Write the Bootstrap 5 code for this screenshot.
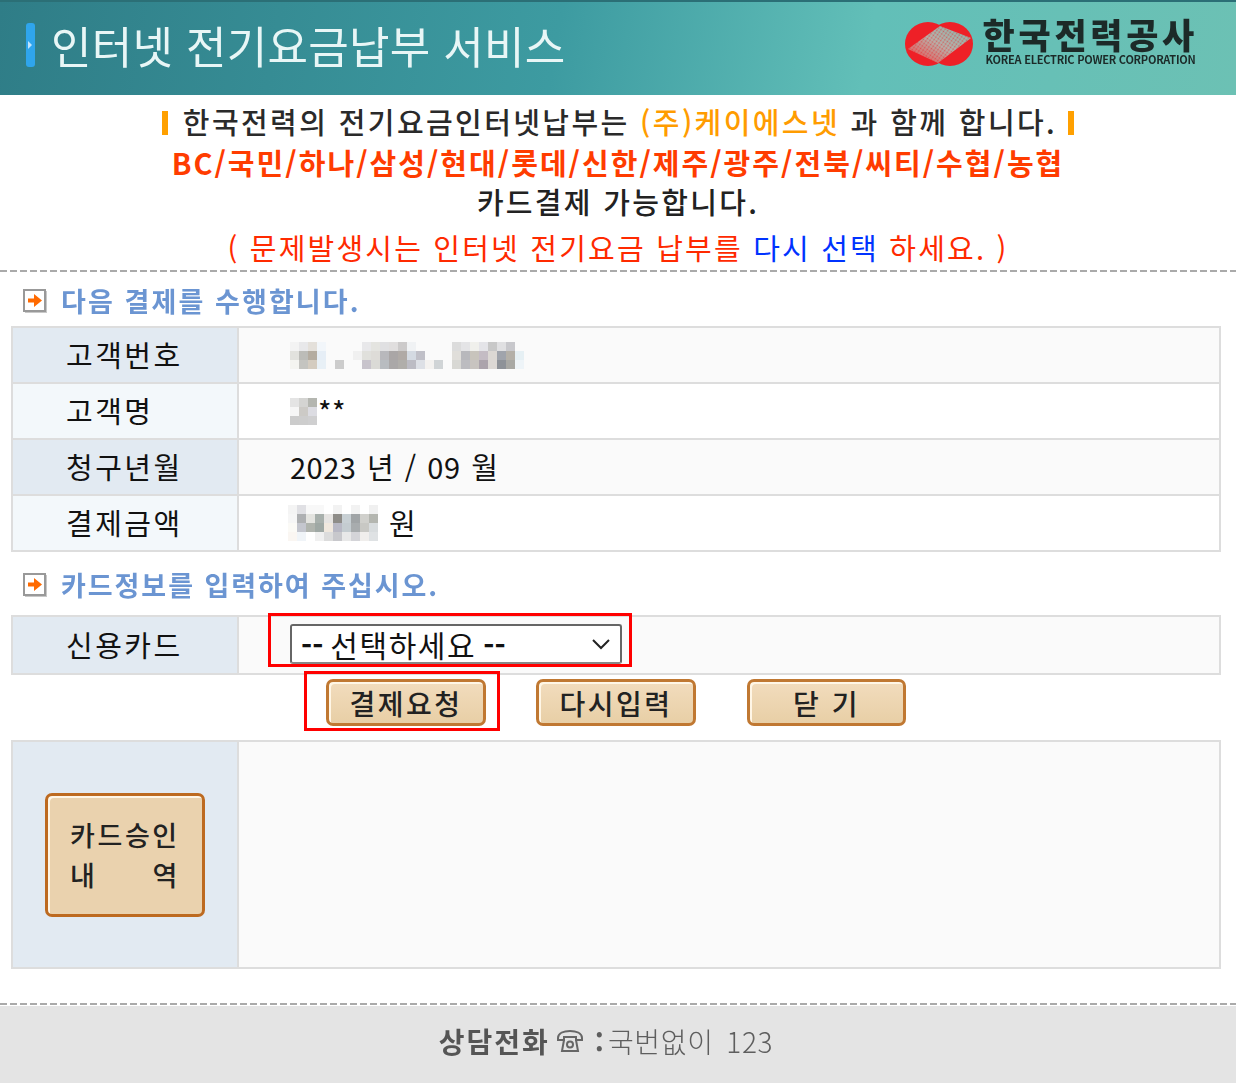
<!DOCTYPE html>
<html lang="ko">
<head>
<meta charset="utf-8">
<title>인터넷 전기요금납부 서비스</title>
<link href="https://cdn.jsdelivr.net/npm/bootstrap@5.3.0/dist/css/bootstrap.min.css" rel="stylesheet">
<style>
html,body{margin:0;background:#fff}
body{font-family:"Noto Sans CJK KR","Liberation Sans",sans-serif;color:#111;width:1236px;overflow-x:hidden}
.hdr{height:95px;border-top:2px solid #2b6f76;background:linear-gradient(100deg,#2f7d87 0%,#3d9ba1 45%,#62bfb8 70%,#6cc1b4 100%);padding:0 38px 7px 26px}
.hdr-bar{width:9px;height:44px;border-radius:3px;background:#2fa5ec;position:relative}
.hdr-bar::after{content:"";position:absolute;left:2px;top:18px;border-left:4px solid #bfe6ff;border-top:4px solid transparent;border-bottom:4px solid transparent}
.hdr-title{font-size:44px;font-weight:400;color:#e8f6f6;letter-spacing:.3px;margin-left:16px;line-height:1;filter:blur(.5px)}
.logo-wrap{gap:10px;margin-top:-3px}
.logo-txt{margin-top:-2px}
.logo-k{font-size:35px;font-weight:900;color:#1c2a28;letter-spacing:3.7px;line-height:28px;filter:blur(.4px)}
.logo-e{font-size:11px;font-weight:700;color:#1c2a28;line-height:11px;letter-spacing:-.25px;white-space:nowrap;filter:blur(.4px);margin:6px 0 0 3px}
.notice{font-size:29px;line-height:40px;text-align:center;white-space:nowrap}
.notice-1{font-weight:500;color:#2a2a2a;height:47px;padding-top:6px;letter-spacing:2.4px}
.notice-2{font-weight:700;color:#ff3c00;height:39px;letter-spacing:2.05px}
.notice-3{font-weight:500;color:#222;height:40px;letter-spacing:2.3px}
.notice-4{font-weight:400;color:#ff2a00;height:49px;padding-top:6px;letter-spacing:2.2px}
.tick{display:inline-block;width:6px;height:24px;background:#ffa000;vertical-align:-1px}
.tick-l{margin-right:15px}
.tick-r{margin-left:11px}
.orange{color:#ff9c00}.blue{color:#0033ff}
.dash{height:2px;background:repeating-linear-gradient(90deg,#aaa 0 7px,transparent 7px 10px)}
.sect{height:54px;padding-left:23px;padding-top:4px;gap:14px;font-size:27px;font-weight:700;color:#6b95d2;letter-spacing:2.1px}
.sect span{filter:blur(.6px)}
.sect-2{height:63px;padding-top:3px;letter-spacing:1.95px}
.pane{margin:0 15px 0 11px;border:2px solid #ddd;border-bottom-width:0}
.line{border-bottom:2px solid #ddd;height:56px;font-size:29px}
.line.pad{height:58px}
.lab{width:226px;flex:none;background:#e2eaf2;border-right:2px solid #ddd;letter-spacing:2.5px;padding-left:53px}
.lab-2{background:#f3f8fb}
.val{background:#fafafa;padding-left:51px;flex:1;letter-spacing:.5px;word-spacing:2px}
.val-2{background:#fff}
.mos{display:block}
.mos-l{margin-left:-2px;margin-right:3px}
.pick{position:relative}
.sel{width:332px;height:40px;border:2px solid #666;border-bottom-color:#888;border-radius:3px;background:#fff;font-size:30px;padding-left:9px;line-height:34px;letter-spacing:1.6px;word-spacing:-3px;font-weight:400;margin-top:-2px}
.sel b{font-weight:700;letter-spacing:0}
.chev{margin-left:auto;margin-right:9px}
.redbox{position:absolute;border:3px solid #f00;pointer-events:none}
.r1{left:255px;top:-4px;width:364px;height:54px}
.r2{left:304px;top:-4px;width:196px;height:60px}
.acts{height:65px;position:relative;padding-left:326px;padding-top:4px}
.kbtn{width:160px;height:47px;background:linear-gradient(#f2dcbd,#e8cfa6);border:3px solid #c07832;border-radius:7px;box-shadow:inset 2px 2px 0 #fff6e6;font-size:28px;font-weight:500;color:#222;display:flex;align-items:center;justify-content:center;letter-spacing:2.5px;padding:0;white-space:nowrap}
.btn-gap1{margin-left:50px}
.btn-gap2{margin-left:51px;width:159px}
.kbtn.tall{height:124px;background:#ead2ae;border-color:#bd6a20;flex-direction:column;font-size:27px;line-height:40px;letter-spacing:0}
.kbtn.tall i{font-style:normal;display:flex;justify-content:space-between;width:110px;letter-spacing:2.6px}
.big{height:227px}
.big .lab{padding-left:32px}
.foot-d{margin-top:34px}
.foot{height:77px;background:#e4e4e4;margin-top:1px;padding-bottom:7px;padding-right:24px;font-size:28px;color:#5e5e5e;filter:blur(.3px)}
.foot b{font-weight:700;color:#555;letter-spacing:2px}
.ph{margin:0 12px 0 7px}
.colon{font-weight:700;margin-right:4px}
.foot-t{font-weight:300;letter-spacing:.7px;word-spacing:4px}
</style>
</head>
<body>
<header class="hdr d-flex align-items-center">
  <div class="hdr-bar"></div>
  <div class="hdr-title">인터넷 전기요금납부 서비스</div>
  <div class="logo-wrap ms-auto d-flex align-items-center">
    <svg width="68" height="46" viewBox="0 0 68 46">
      <defs>
      <pattern id="dots" width="3" height="3" patternUnits="userSpaceOnUse" patternTransform="rotate(35)"><circle cx="1.5" cy="1.5" r=".9" fill="#ee2027"/></pattern>
      <linearGradient id="band" x1="0" y1="1" x2="1" y2="0"><stop offset="0" stop-color="#f04a4a"/><stop offset=".5" stop-color="#b5b5ad"/><stop offset=".8" stop-color="#96bbb1"/><stop offset="1" stop-color="#c77"/></linearGradient>
      <clipPath id="cc"><ellipse cx="23" cy="23" rx="23" ry="22"/><ellipse cx="45" cy="23" rx="23" ry="22"/></clipPath></defs>
      <ellipse cx="23" cy="23" rx="23" ry="22" fill="#ee2027"/><ellipse cx="45" cy="23" rx="23" ry="22" fill="#ee2027"/>
      <polygon points="3,28 35,5 66,17 33,42" fill="url(#band)" clip-path="url(#cc)"/>
      <polygon points="3,28 35,5 66,17 33,42" fill="url(#dots)" opacity=".55" clip-path="url(#cc)"/>
    </svg>
    <div class="logo-txt">
      <div class="logo-k">한국전력공사</div>
      <div class="logo-e">KOREA ELECTRIC POWER CORPORATION</div>
    </div>
  </div>
</header>

<div class="notice notice-1"><span class="tick tick-l"></span>한국전력의 전기요금인터넷납부는 <span class="orange">(주)케이에스넷</span> 과 함께 합니다.<span class="tick tick-r"></span></div>
<div class="notice notice-2">BC/국민/하나/삼성/현대/롯데/신한/제주/광주/전북/씨티/수협/농협</div>
<div class="notice notice-3">카드결제 가능합니다.</div>
<div class="notice notice-4">( 문제발생시는 인터넷 전기요금 납부를 <span class="blue">다시 선택</span> 하세요. )</div>
<div class="dash"></div>

<div class="sect d-flex align-items-center">
  <svg width="24" height="24" viewBox="0 0 24 24"><rect x="2" y="2" width="22" height="22" fill="#c8c8c8"/><rect x="1" y="1" width="21" height="21" fill="#fff" stroke="#999" stroke-width="2"/><path d="M5 9.500h6V5l8 6.500-8 6.500v-4.500H5z" fill="#ff6a00"/></svg>
  <span>다음 결제를 수행합니다.</span>
</div>

<div class="pane">
  <div class="line d-flex">
    <div class="lab d-flex align-items-center">고객번호</div>
    <div class="val d-flex align-items-center">
      <svg class="mos" width="236" height="27" shape-rendering="crispEdges"><g>
      <rect x="0" width="9" height="9" fill="#f3f3f3"/><rect x="9" width="9" height="9" fill="#e8e8ea"/><rect x="18" width="9" height="9" fill="#e4e0da"/><rect x="27" width="9" height="9" fill="#f2f6fa"/>
      <rect x="0" y="9" width="9" height="9" fill="#e2e2de"/><rect x="9" y="9" width="9" height="9" fill="#bcbcb8"/><rect x="18" y="9" width="9" height="9" fill="#b4aca0"/><rect x="27" y="9" width="9" height="9" fill="#e6eef6"/>
      <rect x="0" y="18" width="9" height="9" fill="#f4f4f0"/><rect x="9" y="18" width="9" height="9" fill="#c4c4c0"/><rect x="18" y="18" width="9" height="9" fill="#d4ccc0"/><rect x="27" y="18" width="9" height="9" fill="#e8f0f6"/>
      <rect x="45" y="18" width="9" height="9" fill="#cccccc"/>
      <rect x="72" width="9" height="9" fill="#e8e8ea"/><rect x="81" width="9" height="9" fill="#e4e4e0"/><rect x="90" width="9" height="9" fill="#e0e0e2"/><rect x="99" width="9" height="9" fill="#e0dede"/><rect x="108" width="9" height="9" fill="#cccaca"/><rect x="117" width="9" height="9" fill="#f0f2f4"/>
      <rect x="63" y="9" width="9" height="9" fill="#f0f0f0"/><rect x="72" y="9" width="9" height="9" fill="#e0e0dc"/><rect x="81" y="9" width="9" height="9" fill="#dedcd8"/><rect x="90" y="9" width="9" height="9" fill="#b8b8bc"/><rect x="99" y="9" width="9" height="9" fill="#aaa6a6"/><rect x="108" y="9" width="9" height="9" fill="#b0aaa6"/><rect x="117" y="9" width="9" height="9" fill="#d4dae2"/><rect x="126" y="9" width="9" height="9" fill="#c0c0c8"/>
      <rect x="72" y="18" width="9" height="9" fill="#c8c4cc"/><rect x="81" y="18" width="9" height="9" fill="#dadad6"/><rect x="90" y="18" width="9" height="9" fill="#b8bcc0"/><rect x="99" y="18" width="9" height="9" fill="#aaa8a8"/><rect x="108" y="18" width="9" height="9" fill="#b0aeaa"/><rect x="117" y="18" width="9" height="9" fill="#bcbcc4"/><rect x="126" y="18" width="9" height="9" fill="#dde0e6"/><rect x="135" y="18" width="9" height="9" fill="#f4f2f0"/><rect x="144" y="18" width="9" height="9" fill="#d0d4d6"/>
      <rect x="162" width="9" height="9" fill="#dcdcdc"/><rect x="171" width="9" height="9" fill="#e4e4e6"/><rect x="180" width="9" height="9" fill="#f0f0ec"/><rect x="189" width="9" height="9" fill="#e4e4e8"/><rect x="198" width="9" height="9" fill="#c8c8c8"/><rect x="207" width="9" height="9" fill="#e0e0e2"/><rect x="216" width="9" height="9" fill="#c8c8cc"/>
      <rect x="162" y="9" width="9" height="9" fill="#e0deda"/><rect x="171" y="9" width="9" height="9" fill="#b8b8bc"/><rect x="180" y="9" width="9" height="9" fill="#c8c4bc"/><rect x="189" y="9" width="9" height="9" fill="#c4bcc4"/><rect x="198" y="9" width="9" height="9" fill="#dcd8d4"/><rect x="207" y="9" width="9" height="9" fill="#a0a4ac"/><rect x="216" y="9" width="9" height="9" fill="#b4b0a8"/><rect x="225" y="9" width="9" height="9" fill="#e6f0f4"/>
      <rect x="162" y="18" width="9" height="9" fill="#d8d8d4"/><rect x="171" y="18" width="9" height="9" fill="#bcbcc0"/><rect x="180" y="18" width="9" height="9" fill="#c8c4c0"/><rect x="189" y="18" width="9" height="9" fill="#aca4ac"/><rect x="198" y="18" width="9" height="9" fill="#dcd8d4"/><rect x="207" y="18" width="9" height="9" fill="#8e9298"/><rect x="216" y="18" width="9" height="9" fill="#a8a8a4"/><rect x="225" y="18" width="9" height="9" fill="#eef4f8"/>
      </g></svg>
    </div>
  </div>
  <div class="line d-flex">
    <div class="lab lab-2 d-flex align-items-center">고객명</div>
    <div class="val val-2 d-flex align-items-center">
      <svg class="mos" width="28" height="27" shape-rendering="crispEdges">
      <rect x="0" width="9" height="9" fill="#e4e4e4"/><rect x="9" width="9" height="9" fill="#d4d4d2"/><rect x="18" width="9" height="9" fill="#b4b6b0"/>
      <rect x="0" y="9" width="9" height="9" fill="#f6f6f6"/><rect x="9" y="9" width="9" height="9" fill="#cccac6"/><rect x="18" y="9" width="9" height="9" fill="#dcdce2"/>
      <rect x="0" y="18" width="9" height="9" fill="#cccccc"/><rect x="9" y="18" width="9" height="9" fill="#cdcdcd"/><rect x="18" y="18" width="9" height="9" fill="#cfcfd0"/></svg>
      <span>**</span>
    </div>
  </div>
  <div class="line d-flex">
    <div class="lab d-flex align-items-center">청구년월</div>
    <div class="val d-flex align-items-center">2023 년 / 09 월</div>
  </div>
  <div class="line d-flex">
    <div class="lab lab-2 d-flex align-items-center">결제금액</div>
    <div class="val val-2 d-flex align-items-center gap-2">
      <svg class="mos mos-l" width="90" height="36" shape-rendering="crispEdges">
      <rect x="0" width="9" height="9" fill="#f4f4f4"/><rect x="9" width="9" height="9" fill="#e0e0e4"/><rect x="18" width="9" height="9" fill="#f8f8f8"/><rect x="27" width="9" height="9" fill="#f8f8f8"/><rect x="45" width="9" height="9" fill="#f2f2f2"/><rect x="63" width="9" height="9" fill="#f2f2f2"/><rect x="81" width="9" height="9" fill="#f0f0f0"/>
      <rect x="0" y="9" width="9" height="9" fill="#f6f6f6"/><rect x="9" y="9" width="9" height="9" fill="#aeb0b2"/><rect x="18" y="9" width="9" height="9" fill="#e4e4e0"/><rect x="27" y="9" width="9" height="9" fill="#a8b0ac"/><rect x="36" y="9" width="9" height="9" fill="#e6e4e2"/><rect x="45" y="9" width="9" height="9" fill="#8e8c88"/><rect x="54" y="9" width="9" height="9" fill="#c8d0d4"/><rect x="63" y="9" width="9" height="9" fill="#a0a4a6"/><rect x="72" y="9" width="9" height="9" fill="#d0d0cc"/><rect x="81" y="9" width="9" height="9" fill="#b4b6b0"/>
      <rect x="0" y="18" width="9" height="9" fill="#fbfaf6"/><rect x="9" y="18" width="9" height="9" fill="#c4c6ce"/><rect x="18" y="18" width="9" height="9" fill="#b0b4ae"/><rect x="27" y="18" width="9" height="9" fill="#9fa8a4"/><rect x="36" y="18" width="9" height="9" fill="#f0e8de"/><rect x="45" y="18" width="9" height="9" fill="#b8b8c4"/><rect x="54" y="18" width="9" height="9" fill="#c4ccd0"/><rect x="63" y="18" width="9" height="9" fill="#a8acae"/><rect x="72" y="18" width="9" height="9" fill="#c8c8c4"/><rect x="81" y="18" width="9" height="9" fill="#d8dcde"/>
      <rect x="0" y="27" width="9" height="9" fill="#faf6f2"/><rect x="9" y="27" width="9" height="9" fill="#f0f4f8"/><rect x="27" y="27" width="9" height="9" fill="#f0f0f0"/><rect x="36" y="27" width="9" height="9" fill="#dcdcdc"/><rect x="45" y="27" width="9" height="9" fill="#c8c8cc"/><rect x="54" y="27" width="9" height="9" fill="#e8e8e8"/><rect x="63" y="27" width="9" height="9" fill="#d4d4d8"/><rect x="72" y="27" width="9" height="9" fill="#f0eeec"/><rect x="81" y="27" width="9" height="9" fill="#dfe2e4"/></svg>
      <span>원</span>
    </div>
  </div>
</div>

<div class="sect sect-2 d-flex align-items-center">
  <svg width="24" height="24" viewBox="0 0 24 24"><rect x="2" y="2" width="22" height="22" fill="#c8c8c8"/><rect x="1" y="1" width="21" height="21" fill="#fff" stroke="#999" stroke-width="2"/><path d="M5 9.500h6V5l8 6.500-8 6.500v-4.500H5z" fill="#ff6a00"/></svg>
  <span>카드정보를 입력하여 주십시오.</span>
</div>

<div class="pane">
  <div class="line pad d-flex pick">
    <div class="lab d-flex align-items-center">신용카드</div>
    <div class="val d-flex align-items-center">
      <div class="sel d-flex align-items-center"><span><b>--</b> 선택하세요 <b>--</b></span>
        <svg class="chev" width="20" height="12" viewBox="0 0 20 12"><path d="M2 2l8 8 8-8" fill="none" stroke="#222" stroke-width="2"/></svg>
      </div>
    </div>
    <div class="redbox r1"></div>
  </div>
</div>

<div class="acts d-flex">
  <button class="kbtn" type="button">결제요청</button>
  <button class="kbtn btn-gap1" type="button">다시입력</button>
  <button class="kbtn btn-gap2" type="button">닫 기</button>
  <div class="redbox r2"></div>
</div>

<div class="pane">
  <div class="line big d-flex">
    <div class="lab d-flex align-items-center"><button class="kbtn tall" type="button"><i><span>카드승인</span></i><i><span>내</span><span>역</span></i></button></div>
    <div class="val"></div>
  </div>
</div>

<div class="dash foot-d"></div>
<footer class="foot d-flex align-items-center justify-content-center">
  <b>상담전화</b>
  <svg class="ph" width="26" height="24" viewBox="0 0 26 24" fill="none" stroke="#666" stroke-width="2"><path d="M1 9c0-5 6-7 12-7s12 2 12 7v2h-6V8H7v3H1z"/><path d="M7 11l-2 11h16l-2-11"/><circle cx="13" cy="15.500" r="3"/></svg>
  <span class="colon">:</span>
  <span class="foot-t">국번없이 123</span>
</footer>
</body>
</html>
